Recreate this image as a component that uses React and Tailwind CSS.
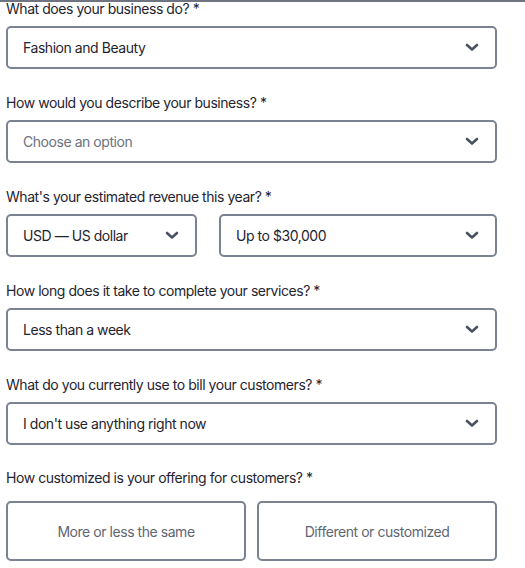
import React from "react";

function Chevron() {
  return (
    <svg width="14" height="9" viewBox="0 0 14 9" fill="none" className="shrink-0">
      <path d="M2 2 L7 6.5 L12 2" stroke="#4a5262" strokeWidth="2.6" strokeLinecap="round" strokeLinejoin="round" />
    </svg>
  );
}

function Select({ value, placeholder, className = "" }) {
  return (
    <div
      className={
        "flex h-[43px] items-center justify-between rounded-[5px] border-2 border-[#7b8292] bg-white pl-[15px] pr-[16px] " +
        className
      }
    >
      <span className={placeholder ? "text-[#6b7280]" : "text-[#1f2430]"}>{value}</span>
      <Chevron />
    </div>
  );
}

function Label({ children }) {
  return <div className="h-[20px] text-[14px] leading-[20px] text-[#1f2430]">{children}</div>;
}

export default function App() {
  return (
    <div
      className="w-[525px] h-[568px] overflow-hidden bg-white border-t-2 border-[#6f7480]"
      style={{ fontFamily: "Inter, 'Noto Sans', sans-serif" }}
    >
      <div className="pl-[6px] w-[497px] text-[14px] tracking-[-0.45px]">
        <div className="-mt-[3px]">
          <Label>What does your business do? *</Label>
          <div className="mt-[7px]">
            <Select value="Fashion and Beauty" />
          </div>
        </div>
        <div className="mt-[24px]">
          <Label>How would you describe your business? *</Label>
          <div className="mt-[7px]">
            <Select value="Choose an option" placeholder />
          </div>
        </div>
        <div className="mt-[24px]">
          <Label>What's your estimated revenue this year? *</Label>
          <div className="mt-[7px] flex gap-[22px]">
            <Select value="USD — US dollar" className="w-[191px] pr-[14px]" />
            <Select value="Up to $30,000" className="flex-1" />
          </div>
        </div>
        <div className="mt-[24px]">
          <Label>How long does it take to complete your services? *</Label>
          <div className="mt-[7px]">
            <Select value="Less than a week" />
          </div>
        </div>
        <div className="mt-[24px]">
          <Label>What do you currently use to bill your customers? *</Label>
          <div className="mt-[7px]">
            <Select value="I don't use anything right now" />
          </div>
        </div>
        <div className="mt-[23px]">
          <Label>How customized is your offering for customers? *</Label>
          <div className="mt-[13px] flex gap-[11px]">
            <button className="flex h-[60px] flex-1 items-center justify-center rounded-[5px] border-2 border-[#7b8292] bg-white text-[#5f6673]">
              More or less the same
            </button>
            <button className="flex h-[60px] flex-1 items-center justify-center rounded-[5px] border-2 border-[#7b8292] bg-white text-[#5f6673]">
              Different or customized
            </button>
          </div>
        </div>
      </div>
    </div>
  );
}
